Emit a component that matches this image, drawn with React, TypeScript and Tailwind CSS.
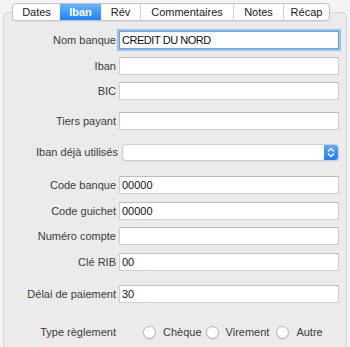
import React from 'react';

const tabs = [
  { label: 'Dates', w: 'w-[47px]' },
  { label: 'Iban', w: 'w-[41px]', active: true },
  { label: 'Rév', w: 'w-[39px]' },
  { label: 'Commentaires', w: 'w-[93px]' },
  { label: 'Notes', w: 'w-[50px]' },
  { label: 'Récap', w: 'w-[46px]' },
];

const Field: React.FC<{ label: string; value?: string; mt: string; focused?: boolean }> = ({ label, value = '', mt, focused }) => (
  <div className={`flex items-center h-[18px] ${mt}`}>
    <div className="w-[112px] text-right text-[#3c3c3c] leading-none">{label}</div>
    <div
      className={`ml-[3px] w-[220px] h-[18px] bg-white border flex items-center pl-[2px] text-[#111] leading-none ${
        focused ? 'border-[#6d9fe6] ring-[2px] ring-[#9cc2f4]' : 'border-[#cfcfcf] border-t-[#bdbdbd]'
      }`}
    >
      <span className={focused ? 'tracking-[-0.45px]' : ''}>{value}</span>
    </div>
  </div>
);

const Radio: React.FC<{ label: string }> = ({ label }) => (
  <div className="flex items-center">
    <span className="w-[13px] h-[13px] rounded-full bg-white border border-[#b4b4b4] shadow-[0_1px_1px_rgba(0,0,0,0.08)]" />
    <span className="ml-[7px] text-[#3c3c3c] leading-none">{label}</span>
  </div>
);

export default function App() {
  return (
    <div
      className="w-[350px] h-[347px] bg-[#f4f4f4] overflow-hidden text-[11px] pt-[12px] px-[3px]"
      style={{ fontFamily: '"Liberation Sans", Arial, sans-serif' }}
    >
      <div className="h-[360px] bg-[#ebebeb] border border-[#d6d6d6] rounded-[5px]">
        {/* tab bar */}
        <div className="ml-[8px] -mt-[10px] flex w-max h-[18px] bg-white border border-[#c4c4c4] rounded-[4px] shadow-[0_1px_1px_rgba(0,0,0,0.06)] overflow-hidden">
          {tabs.map((t, i) => (
            <div
              key={t.label}
              className={`${t.w} flex items-center justify-center leading-none ${
                t.active
                  ? 'bg-gradient-to-b from-[#6ab4fb] to-[#137ffa] text-white font-bold'
                  : 'text-[#222]'
              } ${i > 0 && !t.active && !tabs[i - 1].active ? 'border-l border-[#d4d4d4]' : ''}`}
            >
              {t.label}
            </div>
          ))}
        </div>

        <Field label="Nom banque" value="CREDIT DU NORD" mt="mt-[10px]" focused />
        <Field label="Iban" mt="mt-[8px]" />
        <Field label="BIC" mt="mt-[7px]" />
        <Field label="Tiers payant" mt="mt-[12px]" />

        {/* select */}
        <div className="flex items-center h-[17px] mt-[14px]">
          <div className="w-[114px] text-right text-[#3c3c3c] leading-none">Iban déjà utilisés</div>
          <div className="ml-[4px] w-[217px] h-[17px] bg-white border border-[#cfcfcf] rounded-[4px] flex justify-end overflow-hidden shadow-[0_1px_1px_rgba(0,0,0,0.06)]">
            <div className="w-[14px] h-full bg-gradient-to-b from-[#5ea9fb] to-[#1a7ff8] flex items-center justify-center">
              <svg width="8" height="11" viewBox="0 0 8 11" fill="none" stroke="white" strokeWidth="1.4" strokeLinecap="round" strokeLinejoin="round">
                <path d="M1.5 4 L4 1.5 L6.5 4" />
                <path d="M1.5 7 L4 9.5 L6.5 7" />
              </svg>
            </div>
          </div>
        </div>

        <Field label="Code banque" value="00000" mt="mt-[15px]" />
        <Field label="Code guichet" value="00000" mt="mt-[8px]" />
        <Field label="Numéro compte" mt="mt-[7px]" />
        <Field label="Clé RIB" value="00" mt="mt-[8px]" />
        <Field label="Délai de paiement" value="30" mt="mt-[14px]" />

        {/* radios */}
        <div className="flex items-center h-[14px] mt-[22px]">
          <div className="w-[112px] text-right text-[#3c3c3c] leading-none">Type règlement</div>
          <div className="ml-[27px] flex items-center gap-[4px]">
            <Radio label="Chèque" />
            <Radio label="Virement" />
            <div className="ml-[3px]">
              <Radio label="Autre" />
            </div>
          </div>
        </div>
      </div>
    </div>
  );
}
